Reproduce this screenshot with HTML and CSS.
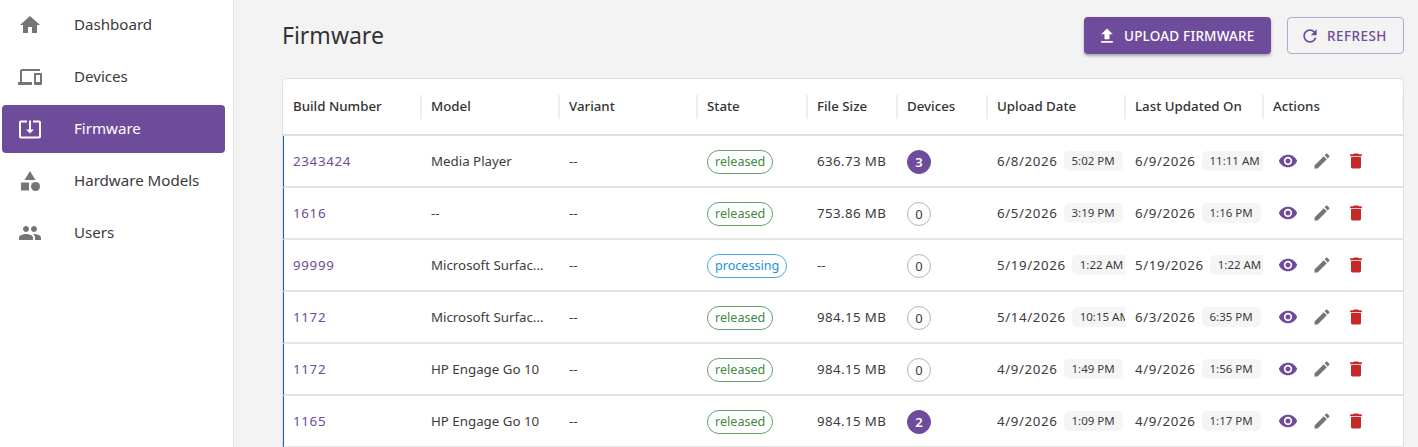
FILE: index.html
```html
<!DOCTYPE html>
<html lang="en">
<head>
<meta charset="utf-8">
<title>Firmware</title>
<link rel="stylesheet" href="styles.css">
</head>
<body>
<svg class="defs" width="0" height="0" aria-hidden="true">
  <symbol id="i-eye" viewBox="0 0 24 24"><path d="M12 4.5C7 4.5 2.73 7.61 1 12c1.73 4.39 6 7.5 11 7.5s9.27-3.11 11-7.5c-1.73-4.39-6-7.5-11-7.5zM12 17c-2.76 0-5-2.24-5-5s2.24-5 5-5 5 2.24 5 5-2.24 5-5 5zm0-8c-1.66 0-3 1.34-3 3s1.34 3 3 3 3-1.34 3-3-1.34-3-3-3z"/></symbol>
  <symbol id="i-edit" viewBox="0 0 24 24"><path d="M3 17.25V21h3.75L17.81 9.94l-3.75-3.75L3 17.25zM20.71 7.04c.39-.39.39-1.02 0-1.41l-2.34-2.34c-.39-.39-1.02-.39-1.41 0l-1.83 1.83 3.75 3.75 1.83-1.83z"/></symbol>
  <symbol id="i-del" viewBox="0 0 24 24"><path d="M6 19c0 1.1.9 2 2 2h8c1.1 0 2-.9 2-2V7H6v12zM19 4h-3.5l-1-1h-5l-1 1H5v2h14V4z"/></symbol>
</svg>
<div class="app">
  <nav class="sidebar">
    <a class="nav-item"><svg class="nav-icon" viewBox="0 0 24 24"><path d="M10 20v-6h4v6h5v-8h3L12 3 2 12h3v8z"/></svg><span>Dashboard</span></a>
    <a class="nav-item"><svg class="nav-icon" viewBox="0 0 24 24"><path d="M4 6h18V4H4c-1.1 0-2 .9-2 2v11H0v3h14v-3H4V6zm19 2h-6c-.55 0-1 .45-1 1v10c0 .55.45 1 1 1h6c.55 0 1-.45 1-1V9c0-.55-.45-1-1-1zm-1 9h-4v-7h4v7z"/></svg><span>Devices</span></a>
    <a class="nav-item active"><svg class="nav-icon" viewBox="0 0 24 24"><path d="M12 16.5l4-4h-3v-9h-2v9H8l4 4zm9-13h-6v1.99h6v14.03H3V5.49h6V3.5H3c-1.1 0-2 .9-2 2v14c0 1.1.9 2 2 2h18c1.1 0 2-.9 2-2v-14c0-1.1-.9-2-2-2z"/></svg><span>Firmware</span></a>
    <a class="nav-item"><svg class="nav-icon" viewBox="0 0 24 24"><path d="M12 2l-5.5 9h11z"/><circle cx="17.5" cy="17.5" r="4.5"/><path d="M3 13.5h8v8H3z"/></svg><span>Hardware Models</span></a>
    <a class="nav-item"><svg class="nav-icon" viewBox="0 0 24 24"><path d="M16 11c1.66 0 2.99-1.34 2.99-3S17.66 5 16 5c-1.66 0-3 1.34-3 3s1.34 3 3 3zm-8 0c1.66 0 2.99-1.34 2.99-3S9.66 5 8 5C6.34 5 5 6.34 5 8s1.34 3 3 3zm0 2c-2.33 0-7 1.17-7 3.5V19h14v-2.5c0-2.33-4.67-3.5-7-3.5zm8 0c-.29 0-.62.02-.97.05 1.16.84 1.97 1.97 1.97 3.45V19h6v-2.5c0-2.33-4.67-3.5-7-3.5z"/></svg><span>Users</span></a>
  </nav>
  <main class="main">
    <header class="top">
      <h1 class="title">Firmware</h1>
      <div class="top-actions">
        <button class="btn btn-primary"><svg class="btn-icon" viewBox="0 0 24 24"><path d="M9 16h6v-6h4l-7-7-7 7h4zm-4 2h14v2H5z"/></svg>UPLOAD FIRMWARE</button>
        <button class="btn btn-outline"><svg class="btn-icon" viewBox="0 0 24 24"><path d="M17.65 6.35C16.2 4.9 14.21 4 12 4c-4.42 0-7.99 3.58-7.99 8s3.57 8 7.99 8c3.73 0 6.84-2.55 7.73-6h-2.08c-.82 2.33-3.04 4-5.65 4-3.31 0-6-2.69-6-6s2.69-6 6-6c1.66 0 3.14.69 4.22 1.78L13 11h7V4l-2.35 2.35z"/></svg>REFRESH</button>
      </div>
    </header>
    <section class="card">
      <table class="grid">
        <colgroup>
          <col class="w138"><col class="w138"><col class="w138"><col class="w110"><col class="w90"><col class="w90"><col class="w138"><col class="w138"><col class="w140">
        </colgroup>
        <thead>
          <tr>
            <th><div class="th-in">Build Number</div></th>
            <th><div class="th-in">Model</div></th>
            <th><div class="th-in">Variant</div></th>
            <th><div class="th-in">State</div></th>
            <th><div class="th-in">File Size</div></th>
            <th><div class="th-in">Devices</div></th>
            <th><div class="th-in">Upload Date</div></th>
            <th><div class="th-in">Last Updated On</div></th>
            <th><div class="th-in">Actions</div></th>
          </tr>
        </thead>
        <tbody>
          <tr>
            <td class="num"><a class="link">2343424</a></td><td>Media Player</td><td>--</td>
            <td><span class="state ok">released</span></td><td class="num">636.73 MB</td>
            <td><span class="count on">3</span></td>
            <td><div class="when"><span class="date">6/8/2026</span><span class="time">5:02 PM</span></div></td>
            <td><div class="when"><span class="date">6/9/2026</span><span class="time">11:11 AM</span></div></td>
            <td><div class="acts"><svg class="act eye"><use href="#i-eye"/></svg><svg class="act edit"><use href="#i-edit"/></svg><svg class="act del"><use href="#i-del"/></svg></div></td>
          </tr>
          <tr>
            <td class="num"><a class="link">1616</a></td><td>--</td><td>--</td>
            <td><span class="state ok">released</span></td><td class="num">753.86 MB</td>
            <td><span class="count">0</span></td>
            <td><div class="when"><span class="date">6/5/2026</span><span class="time">3:19 PM</span></div></td>
            <td><div class="when"><span class="date">6/9/2026</span><span class="time">1:16 PM</span></div></td>
            <td><div class="acts"><svg class="act eye"><use href="#i-eye"/></svg><svg class="act edit"><use href="#i-edit"/></svg><svg class="act del"><use href="#i-del"/></svg></div></td>
          </tr>
          <tr>
            <td class="num"><a class="link">99999</a></td><td>Microsoft Surfac...</td><td>--</td>
            <td><span class="state busy">processing</span></td><td>--</td>
            <td><span class="count">0</span></td>
            <td><div class="when"><span class="date">5/19/2026</span><span class="time">1:22 AM</span></div></td>
            <td><div class="when"><span class="date">5/19/2026</span><span class="time">1:22 AM</span></div></td>
            <td><div class="acts"><svg class="act eye"><use href="#i-eye"/></svg><svg class="act edit"><use href="#i-edit"/></svg><svg class="act del"><use href="#i-del"/></svg></div></td>
          </tr>
          <tr>
            <td class="num"><a class="link">1172</a></td><td>Microsoft Surfac...</td><td>--</td>
            <td><span class="state ok">released</span></td><td class="num">984.15 MB</td>
            <td><span class="count">0</span></td>
            <td><div class="when"><span class="date">5/14/2026</span><span class="time">10:15 AM</span></div></td>
            <td><div class="when"><span class="date">6/3/2026</span><span class="time">6:35 PM</span></div></td>
            <td><div class="acts"><svg class="act eye"><use href="#i-eye"/></svg><svg class="act edit"><use href="#i-edit"/></svg><svg class="act del"><use href="#i-del"/></svg></div></td>
          </tr>
          <tr>
            <td class="num"><a class="link">1172</a></td><td>HP Engage Go 10</td><td>--</td>
            <td><span class="state ok">released</span></td><td class="num">984.15 MB</td>
            <td><span class="count">0</span></td>
            <td><div class="when"><span class="date">4/9/2026</span><span class="time">1:49 PM</span></div></td>
            <td><div class="when"><span class="date">4/9/2026</span><span class="time">1:56 PM</span></div></td>
            <td><div class="acts"><svg class="act eye"><use href="#i-eye"/></svg><svg class="act edit"><use href="#i-edit"/></svg><svg class="act del"><use href="#i-del"/></svg></div></td>
          </tr>
          <tr>
            <td class="num"><a class="link">1165</a></td><td>HP Engage Go 10</td><td>--</td>
            <td><span class="state ok">released</span></td><td class="num">984.15 MB</td>
            <td><span class="count on">2</span></td>
            <td><div class="when"><span class="date">4/9/2026</span><span class="time">1:09 PM</span></div></td>
            <td><div class="when"><span class="date">4/9/2026</span><span class="time">1:17 PM</span></div></td>
            <td><div class="acts"><svg class="act eye"><use href="#i-eye"/></svg><svg class="act edit"><use href="#i-edit"/></svg><svg class="act del"><use href="#i-del"/></svg></div></td>
          </tr>
        </tbody>
      </table>
    </section>
  </main>
</div>
</body>
</html>
```
FILE: styles.css
```css
* { box-sizing: border-box; }
html, body { margin: 0; height: 447px; overflow: hidden; }
body { font-family: "Noto Sans", Roboto, sans-serif; font-size: 14px; color: #333; background: #f3f3f3; }
.defs { position: absolute; }
.app { display: flex; height: 447px; }

.sidebar { width: 234px; flex: none; background: #fff; border-right: 1px solid #e2e2e2; padding: 1px 8px 0 2px; display: flex; flex-direction: column; gap: 4px; }
.nav-item { height: 48px; flex: none; display: flex; align-items: center; padding-left: 16px; border-radius: 4px; font-size: 15.1px; color: #3a3a3a; }
.nav-item span { margin-left: 32px; padding-bottom: 2px; }
.nav-icon { width: 24px; height: 24px; fill: #757575; flex: none; }
.nav-item.active { background: #6f4b9b; color: #fff; }
.nav-item.active .nav-icon { fill: #fff; }

.main { flex: 1; min-width: 0; padding: 17px 14px 0 48px; }
.top { display: flex; justify-content: space-between; align-items: center; height: 37px; margin-bottom: 24px; }
.title { margin: -2px 0 0; font-size: 23px; font-weight: 400; color: #333; line-height: 36px; }
.top-actions { display: flex; gap: 16px; }
.btn { height: 37px; display: flex; align-items: center; font-family: inherit; font-size: 13.5px; font-weight: 500; letter-spacing: .2px; border-radius: 4px; padding: 0 0 0 13px; }
.btn-icon { width: 20px; height: 20px; margin-right: 7px; fill: currentColor; flex: none; }
.btn-primary { width: 187px; background: #6f4b9b; color: #fff; border: 0; box-shadow: 0 2px 3px rgba(0,0,0,.3); }
.btn-outline { width: 117px; padding-left: 12px; background: transparent; color: #6f4b9b; border: 1px solid #b9a5d2; letter-spacing: .45px; }

.card { width: 1122px; background: #fff; border: 1px solid #dde1e6; border-bottom: 0; border-radius: 5px 5px 0 0; height: 369px; overflow: hidden; }
.grid { border-collapse: separate; border-spacing: 0; table-layout: fixed; width: 1120px; }
.w138 { width: 138px; }
.w110 { width: 110px; }
.w90 { width: 90px; }
.w140 { width: 140px; }

th { height: 57px; padding: 0; text-align: left; font-weight: 500; font-size: 13.3px; color: #333; border-bottom: 2px solid #e0e0e0; }
.th-in { height: 24px; line-height: 22px; padding-left: 10px; margin-right: -1px; border-right: 2px solid #eee; white-space: nowrap; }

td { height: 52px; padding: 0 0 0 10px; font-size: 13.3px; color: #3c3c3c; white-space: nowrap; overflow: hidden; border-bottom: 2px solid #e4e4e4; }
td:first-child { border-left: 1px solid #1f5fa8; padding-left: 9px; }
.num { letter-spacing: .4px; }
.link { color: #6f4b9b; letter-spacing: .7px; }

.state { display: block; width: fit-content; height: 24px; line-height: 22px; margin-top: 2px; padding: 0 7px; border-radius: 12px; font-size: 12.6px; border: 1px solid; }
.state.ok { color: #3f8a44; border-color: #64a068; }
.state.busy { color: #2490dc; border-color: #4da6e4; }

.count { display: flex; align-items: center; justify-content: center; width: 24px; height: 24px; margin-top: 2px; border-radius: 50%; border: 1px solid #b5b5b5; font-size: 13px; }
.count.on { background: #6f4b9b; border-color: #6f4b9b; color: #fff; font-weight: 600; }

.when { display: flex; align-items: center; gap: 6px; }
.date { letter-spacing: .62px; flex: none; }
.time { flex: none; height: 20px; line-height: 20px; padding: 0 8px; background: #f5f5f5; border-radius: 5px; font-size: 11.5px; }

.acts { display: flex; align-items: center; padding-left: 5px; }
.act { width: 20px; height: 20px; flex: none; margin-right: 14px; }
.eye { fill: #6f4b9b; }
.edit { fill: #757575; }
.del { fill: #c62828; }
```
